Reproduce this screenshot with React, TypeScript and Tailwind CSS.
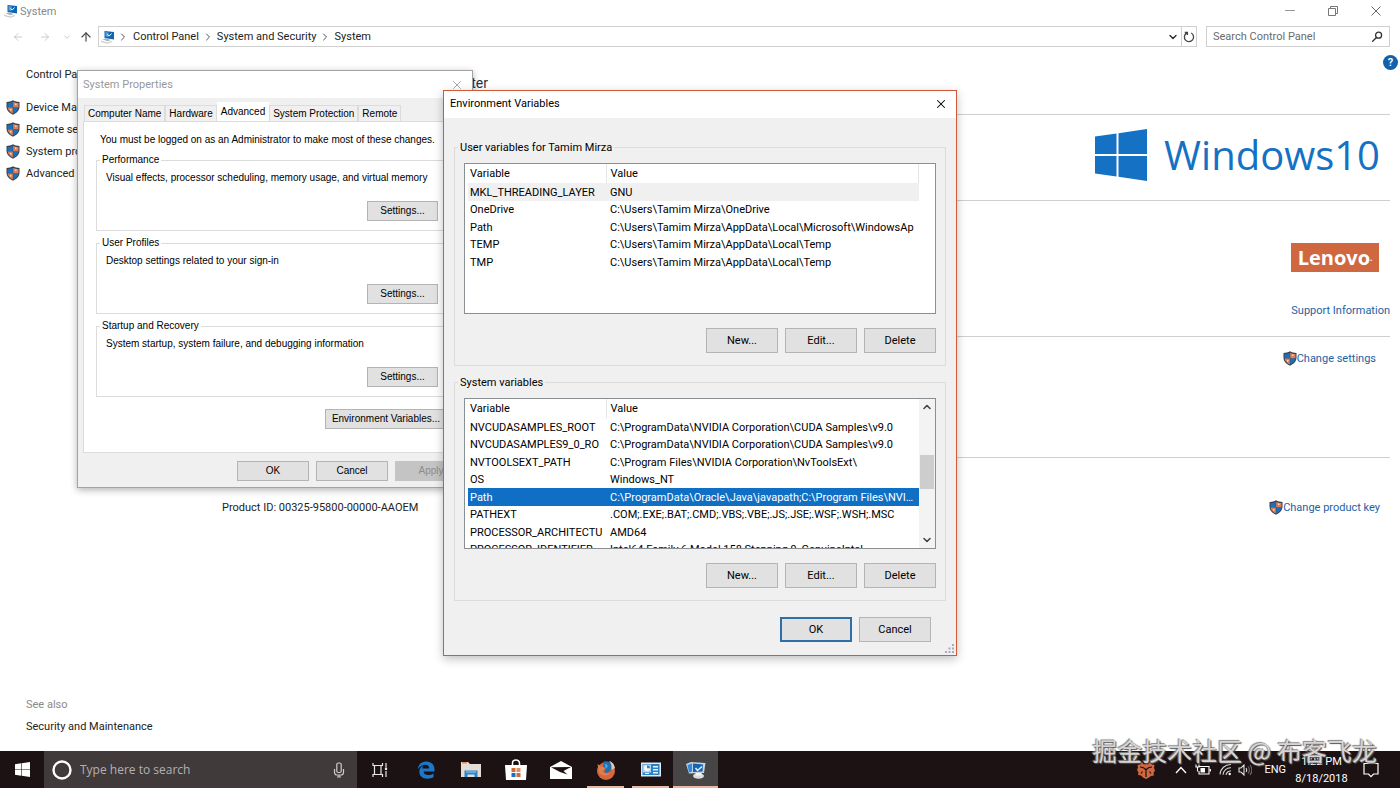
import React, { useState } from 'react';
import { ArrowLeft, ArrowRight, ArrowUp, ChevronDown, ChevronRight, ChevronUp, X } from 'lucide-react';

interface Variable {
  name: string;
  value: string;
}

const userVariables: Variable[] = [
  { name: 'MKL_THREADING_LAYER', value: 'GNU' },
  { name: 'OneDrive', value: 'C:\\Users\\Tamim Mirza\\OneDrive' },
  { name: 'Path', value: 'C:\\Users\\Tamim Mirza\\AppData\\Local\\Microsoft\\WindowsAp' },
  { name: 'TEMP', value: 'C:\\Users\\Tamim Mirza\\AppData\\Local\\Temp' },
  { name: 'TMP', value: 'C:\\Users\\Tamim Mirza\\AppData\\Local\\Temp' }
];

const systemVariables: Variable[] = [
  { name: 'NVCUDASAMPLES_ROOT', value: 'C:\\ProgramData\\NVIDIA Corporation\\CUDA Samples\\v9.0' },
  { name: 'NVCUDASAMPLES9_0_RO', value: 'C:\\ProgramData\\NVIDIA Corporation\\CUDA Samples\\v9.0' },
  { name: 'NVTOOLSEXT_PATH', value: 'C:\\Program Files\\NVIDIA Corporation\\NvToolsExt\\' },
  { name: 'OS', value: 'Windows_NT' },
  { name: 'Path', value: 'C:\\ProgramData\\Oracle\\Java\\javapath;C:\\Program Files\\NVIDI...' },
  { name: 'PATHEXT', value: '.COM;.EXE;.BAT;.CMD;.VBS;.VBE;.JS;.JSE;.WSF;.WSH;.MSC' },
  { name: 'PROCESSOR_ARCHITECTU', value: 'AMD64' },
  { name: 'PROCESSOR_IDENTIFIER', value: 'Intel64 Family 6 Model 158 Stepping 9, GenuineIntel' }
];

const tabs = ['Computer Name', 'Hardware', 'Advanced', 'System Protection', 'Remote'];

const propertyGroups = [
  { title: 'Performance', text: 'Visual effects, processor scheduling, memory usage, and virtual memory' },
  { title: 'User Profiles', text: 'Desktop settings related to your sign-in' },
  { title: 'Startup and Recovery', text: 'System startup, system failure, and debugging information' }
];

function ShieldIcon() {
  return (
    <svg viewBox="0 0 14 15" className="w-3.5 h-[15px] shrink-0" aria-hidden="true">
      <path d="M7 .3C5.200 1.600 3 2 .5 2v4.500C.5 10.300 3.400 13.300 7 14.700c3.600-1.400 6.500-4.400 6.500-8.200V2C11 2 8.800 1.600 7 .3Z" fill="#39404a" />
      <path d="M6.800 1.700C5.300 2.600 3.500 3 1.500 3v4.400h5.300Z" fill="#1c6fba" />
      <path d="M7.200 1.700C8.700 2.600 10.500 3 12.500 3v4.400H7.200Z" fill="#dc7f5a" />
      <path d="M1.600 7.600c.4 2.700 2.500 4.800 5.200 6V7.600Z" fill="#dc7f5a" />
      <path d="M12.400 7.600c-.4 2.700-2.500 4.800-5.200 6V7.600Z" fill="#1c6fba" />
      <path d="M9 3.500h1.500v1.500H9zM4 9h1.500v1.500H4z" fill="#f6d9c8" />
    </svg>
  );
}

function SystemIcon() {
  return (
    <svg viewBox="0 0 16 16" className="w-4 h-4 shrink-0" aria-hidden="true">
      <path d="M3.500 2 13 3v7.500L3.500 9Z" fill="#1266b0" />
      <path d="M4.500 3 7.500 3.400v4.500L4.500 7.400Z" fill="#4ba3e2" />
      <path d="m6.500 5.300 1.700 1.700L10.500 4.500" fill="none" stroke="#fff" />
      <path d="M1.500 10.300 5 9.600l5 1.400-3.500 1.200Z" fill="#a9afb5" />
      <path d="M0 12.300 6.500 14l4.500-1.500" fill="none" stroke="#c8ccd0" strokeWidth="1.200" />
    </svg>
  );
}

function WindowsLogo({ className }: { className: string }) {
  return (
    <svg viewBox="0 0 52 52" className={className} aria-hidden="true">
      <path d="M0 7.500 21.500 4.500V25H0ZM23.500 4.200 52 0v25H23.500ZM0 27h21.500v20.600L0 44.600ZM23.500 27H52v25l-28.500-4.200Z" fill="currentColor" />
    </svg>
  );
}

function DialogButton({ children, primary }: { children: React.ReactNode; primary?: boolean }) {
  return (
    <button
      type="button"
      className={`w-[72px] h-[25px] bg-[#e1e1e1] text-center leading-[17px] ${primary ? 'border-2 border-[#2f6fa8]' : 'border border-[#b4b4b4]'}`}
    >
      {children}
    </button>
  );
}

interface VariableGroupProps {
  title: string;
  rows: Variable[];
  highlight: number;
  highlightClass: string;
  scroll?: boolean;
}

function VariableGroup({ title, rows, highlight, highlightClass, scroll }: VariableGroupProps) {
  return (
    <fieldset className="border border-[#dcdcdc] px-[9px] pb-3">
      <legend className="-ml-1.5 px-0.5 h-4 leading-[17px]">{title}</legend>
      <div className="flex justify-between mt-2 h-[151px] border border-[#8a8f94] bg-white overflow-hidden">
        <div className="flex-1 pl-[3px]">
          <table className="w-full table-fixed border-collapse whitespace-nowrap leading-[17px]">
            <thead>
              <tr className="h-[19px] text-left">
                <th className="w-[138px] p-0 pl-0.5 font-normal border-r border-[#e5e5e5]">Variable</th>
                <th className={`p-0 pl-1 font-normal ${scroll ? '' : 'border-r border-[#e5e5e5]'}`}>Value</th>
              </tr>
            </thead>
            <tbody>
              {rows.map((row, i) => (
                <tr key={row.name} className={`odd:h-[18px] even:h-[17px] ${i === highlight ? highlightClass : ''}`}>
                  <td className="p-0 pl-0.5 overflow-hidden">{row.name}</td>
                  <td className="p-0 pl-1 truncate">{row.value}</td>
                </tr>
              ))}
            </tbody>
          </table>
        </div>
        {scroll ? (
          <div className="flex flex-col items-center w-4 bg-[#f3f3f3] text-[#404040]">
            <ChevronUp className="w-3 h-4" strokeWidth={3} />
            <div className="w-3.5 h-[34px] mt-10 mb-auto bg-[#cdcdcd]" />
            <ChevronDown className="w-3 h-4" strokeWidth={3} />
          </div>
        ) : (
          <div className="w-4" />
        )}
      </div>
      <div className="flex justify-end gap-[7px] mt-3.5">
        <DialogButton>New...</DialogButton>
        <DialogButton>Edit...</DialogButton>
        <DialogButton>Delete</DialogButton>
      </div>
    </fieldset>
  );
}

function SystemProperties() {
  const [active, setActive] = useState('Advanced');

  return (
    <section
      aria-label="System Properties"
      className="absolute left-[77px] top-[70px] w-[396px] border border-[#a3a3a3] bg-[#f0f0f0] shadow-[0_2px_7px_rgba(0,0,0,0.3)] text-[10px] leading-[14px] text-black font-['Liberation_Sans',Arial,sans-serif]"
    >
      <div className="flex items-center justify-between h-[27px] pl-[5px] pr-2 bg-white text-[#999] text-[11px] font-['Roboto','Noto_Sans',sans-serif]">
        <span>System Properties</span>
        <button type="button" aria-label="Close">
          <X className="w-3.5 h-3.5" strokeWidth={1.5} />
        </button>
      </div>
      <div className="px-[5px] pt-1 pb-1.5">
        <div role="tablist" className="flex items-end h-[19px] pl-px">
          {tabs.map((tab) => (
            <button
              key={tab}
              type="button"
              role="tab"
              aria-selected={tab === active}
              onClick={() => setActive(tab)}
              className={`whitespace-nowrap ${
                tab === active ? 'h-[19px] px-1 bg-white' : 'h-4 px-[3px] border border-b-0 border-[#dcdcdc]'
              }`}
            >
              {tab}
            </button>
          ))}
        </div>
        <div className="border border-[#dcdcdc] bg-white px-3 pt-[11px] pb-[23px]">
          <p className="pl-1 mb-1.5 whitespace-nowrap">You must be logged on as an Administrator to make most of these changes.</p>
          {propertyGroups.map((group) => (
            <fieldset key={group.title} className="mb-[5px] pl-[9px] pr-[15px] pb-[9px] border border-[#dcdcdc]">
              <legend className="-ml-1.5 px-0.5">{group.title}</legend>
              <p className="pt-1 whitespace-nowrap">{group.text}</p>
              <div className="flex justify-end mt-4">
                <button type="button" className="w-[71px] h-5 bg-[#e1e1e1] border border-[#b4b4b4]">
                  Settings...
                </button>
              </div>
            </fieldset>
          ))}
          <div className="flex justify-end mt-3 pr-[7px]">
            <button type="button" className="w-[122px] h-5 bg-[#e1e1e1] border border-[#b4b4b4] whitespace-nowrap">
              Environment Variables...
            </button>
          </div>
        </div>
        <div className="flex justify-end gap-[7px] mt-2">
          <button type="button" className="w-[72px] h-5 bg-[#e1e1e1] border border-[#b4b4b4]">OK</button>
          <button type="button" className="w-[72px] h-5 bg-[#e1e1e1] border border-[#b4b4b4]">Cancel</button>
          <button type="button" disabled className="w-[72px] h-5 bg-[#c4c4c4] text-[#8c8c8c]">Apply</button>
        </div>
      </div>
    </section>
  );
}

function EnvironmentVariables() {
  return (
    <section
      aria-label="Environment Variables"
      className="absolute left-[443px] top-[90px] w-[514px] border border-[#cf5a35] bg-[#f0f0f0] shadow-[0_3px_9px_rgba(0,0,0,0.25)] text-black"
    >
      <div className="flex items-center justify-between h-[27px] pl-1.5 pr-2 pb-0.5 bg-white">
        <span>Environment Variables</span>
        <button type="button" aria-label="Close">
          <X className="w-3.5 h-3.5" strokeWidth={1.8} />
        </button>
      </div>
      <div className="flex flex-col gap-2 px-2.5 pt-[21px] pb-[13px]">
        <VariableGroup title="User variables for Tamim Mirza" rows={userVariables} highlight={0} highlightClass="bg-[#f0f0f0]" />
        <VariableGroup title="System variables" rows={systemVariables} highlight={4} highlightClass="bg-[#0f6fc5] text-white" scroll />
        <div className="flex justify-end gap-[7px] mt-2 pr-[15px]">
          <DialogButton primary>OK</DialogButton>
          <DialogButton>Cancel</DialogButton>
        </div>
      </div>
      <svg viewBox="0 0 9 9" className="absolute right-0.5 bottom-0.5 w-[9px] h-[9px]" aria-hidden="true">
        <path d="M7 0h2v2H7zM3.500 3.500h2v2h-2zM7 3.500h2v2H7zM0 7h2v2H0zM3.500 7h2v2h-2zM7 7h2v2H7z" fill="#a9abc0" />
      </svg>
    </section>
  );
}

function AddressBar() {
  return (
    <div className="flex items-center mt-1 pl-3 pr-2.5 h-[21px]">
      <div className="flex items-center w-[86px] text-[#bdbdbd]">
        <button type="button" aria-label="Back" className="w-[27px]">
          <ArrowLeft className="w-3 h-3" strokeWidth={1.6} />
        </button>
        <button type="button" aria-label="Forward" className="w-[23px]">
          <ArrowRight className="w-3 h-3" strokeWidth={1.6} />
        </button>
        <button type="button" aria-label="Recent locations" className="w-[17px]">
          <ChevronDown className="w-2.5 h-2.5" />
        </button>
        <button type="button" aria-label="Up" className="text-[#444]">
          <ArrowUp className="w-3.5 h-3.5" />
        </button>
      </div>
      <div className="flex flex-1 items-center h-full pl-0.5 leading-[17px] border border-[#d0d0d0]">
        <SystemIcon />
        <ChevronRight className="w-3 h-3 mr-1 text-[#555]" />
        <a href="#control-panel">Control Panel</a>
        <ChevronRight className="w-3 h-3 mx-[3px] text-[#555]" />
        <a href="#security">System and Security</a>
        <ChevronRight className="w-3 h-3 mx-[3px] text-[#555]" />
        <a href="#system">System</a>
        <button type="button" aria-label="Previous locations" className="ml-auto mr-0.5">
          <ChevronDown className="w-3 h-3" strokeWidth={2.5} />
        </button>
        <button type="button" aria-label="Refresh" className="flex items-center justify-center w-[15px] h-full border-l border-[#d0d0d0]">
          <svg viewBox="0 0 12 12" className="w-3 h-3" fill="none" stroke="#444" strokeWidth="1.300">
            <path d="M8.200 2A4.600 4.600 0 1 1 3.600 2.100M1.800 1.500h2.600V4" />
          </svg>
        </button>
      </div>
      <label className="flex items-center w-[184px] h-full ml-[9px] px-1.5 border border-[#d0d0d0]">
        <input type="text" aria-label="Search Control Panel" placeholder="Search Control Panel" className="flex-1 min-w-0 leading-[17px] outline-none placeholder:text-[#6b6b6b]" />
        <svg viewBox="0 0 12 12" className="w-3 h-3" fill="none" stroke="#333" strokeWidth="1.300" aria-hidden="true">
          <circle cx="7.600" cy="4.200" r="3" />
          <path d="M5.400 6.500 1.200 10.800" />
        </svg>
      </label>
    </div>
  );
}

function Sidebar() {
  const links = ['Device Manager', 'Remote settings', 'System protection', 'Advanced system settings'];

  return (
    <nav className="flex flex-col w-[212px] pt-4 pb-[13px] leading-[22px]">
      <a href="#home" className="pl-[26px] pt-px mb-2.5">Control Panel Home</a>
      {links.map((link) => (
        <a key={link} href="#task" className="flex items-center gap-1.5 pl-1.5">
          <ShieldIcon />
          <span className="pt-px leading-[21px]">{link}</span>
        </a>
      ))}
      <span className="mt-auto pl-[26px] text-[#8a8a8a]">See also</span>
      <a href="#maintenance" className="pl-[26px]">Security and Maintenance</a>
    </nav>
  );
}

function SystemInfo() {
  return (
    <main className="flex-1 pt-6 pr-2.5">
      <h1 className="h-[43px] leading-6 text-sm text-[#26313f]">View basic information about your computer</h1>
      <div className="flex justify-end items-center h-[86px] pr-2.5 pb-1.5 gap-[17px] border-t border-[#cfcfcf] text-[#1471c4]">
        <WindowsLogo className="w-[52px] h-[52px]" />
        <div className="flex text-[40px] leading-none font-normal font-['Open_Sans','Noto_Sans',sans-serif]">
          <span>Windows</span>
          <span>10</span>
        </div>
      </div>
      <div className="flex flex-col items-end h-[136px] pt-[42px] border-t border-[#cfcfcf]">
        <div className="flex items-center justify-center w-[88px] h-[29px] mr-[11px] bg-[#cf6740] text-white text-[20px] font-bold leading-none font-['Open_Sans',sans-serif]">
          Lenovo<span className="text-[8px]">.</span>
        </div>
        <a href="#support" className="mt-7 leading-[22px] text-[#1b62a5]">Support Information</a>
      </div>
      <div className="flex justify-end h-[121px] pt-2.5 pr-3.5 border-t border-[#cfcfcf]">
        <a href="#settings" className="flex items-center h-[22px] text-[#1b62a5]">
          <ShieldIcon />
          <span className="pt-px">Change settings</span>
        </a>
      </div>
      <div className="flex justify-between items-center h-[99px] pl-2.5 pr-2.5 border-t border-[#cfcfcf]">
        <span className="pt-px">Product ID: 00325-95800-00000-AAOEM</span>
        <a href="#key" className="flex items-center text-[#1b62a5]">
          <ShieldIcon />
          <span className="pt-px">Change product key</span>
        </a>
      </div>
    </main>
  );
}

interface TaskButtonProps {
  label: string;
  running?: boolean;
  current?: boolean;
  children: React.ReactNode;
}

function TaskButton({ label, running, current, children }: TaskButtonProps) {
  return (
    <button
      type="button"
      aria-label={label}
      className={`relative flex items-center justify-center w-[45px] h-full ${current ? 'bg-[#474545]' : ''}`}
    >
      {children}
      {running && <span className={`absolute bottom-0 h-0.5 bg-[#e9b7a6] ${current ? 'inset-x-0' : 'inset-x-1'}`} />}
    </button>
  );
}

function Taskbar() {
  return (
    <footer className="flex items-center h-[37px] bg-[#1c1213] text-white">
      <button type="button" aria-label="Start" className="flex items-center justify-center w-11 h-full">
        <WindowsLogo className="w-[15px] h-[15px]" />
      </button>
      <label className="flex items-center w-[313px] h-full px-2 bg-[#403a3b]">
        <svg viewBox="0 0 20 20" className="w-5 h-5" fill="none" stroke="#fff" strokeWidth="2.400" aria-hidden="true">
          <circle cx="10" cy="10" r="8.500" />
        </svg>
        <input
          type="text"
          aria-label="Type here to search"
          placeholder="Type here to search"
          className="flex-1 min-w-0 pl-2 text-[12px] outline-none placeholder:text-[#b5b1b1] font-['Open_Sans','Noto_Sans',sans-serif]"
        />
        <svg viewBox="0 0 12 16" className="w-3 h-4 mr-1" fill="none" stroke="#cfcccc" strokeWidth="1.200" aria-hidden="true">
          <rect x="3.800" y="1" width="4.400" height="9.500" rx="1.500" />
          <path d="M1.500 7v3.500a2.500 2.500 0 0 0 2.500 2.500h4a2.500 2.500 0 0 0 2.500-2.500V7M6 13v2M4 15h4" />
        </svg>
      </label>
      <TaskButton label="Task view">
        <svg viewBox="0 0 16 16" className="w-4 h-4" fill="none" stroke="#e8e6e6" strokeWidth="1.200">
          <path d="M1 1v2.500h9.500V1M1 15v-2.500h9.500V15M2.500 3.500v9M9 3.500v9M14 1v4M14 9v6" />
          <path d="M14 5.500v2.500" strokeWidth="2.200" />
        </svg>
      </TaskButton>
      <div className="flex h-full ml-px">
        <TaskButton label="Edge">
          <svg viewBox="0 0 18 18" className="w-[18px] h-[18px]">
            <path d="M.7 8.200C1.200 3.600 4.600.4 9.300.4c5 0 8.200 3.300 8.200 8.200v1.900H6.500c.2 2.300 2.100 3.600 4.800 3.600 1.900 0 3.700-.5 5.200-1.500v3.700c-1.700.9-3.600 1.400-5.900 1.400-5.100 0-8.300-2.800-8.300-7 0-2.900 1.600-5.200 4.400-6.500-.9 1-1.300 2-1.400 3.300h6.900c0-2.300-1.300-3.700-3.800-3.700C5.300 3.800 2.700 5.400.7 8.200Z" fill="#1b78cc" />
          </svg>
        </TaskButton>
        <TaskButton label="File Explorer">
          <svg viewBox="0 0 20 17" className="w-5 h-[17px]">
            <path d="M0 1h7l2 2h11v13H0Z" fill="#e3ddd6" />
            <path d="M1 1h5v1.500H1z" fill="#dd8a6b" />
            <path d="M3.500 16V9.500H16.500V16h-3v-2.500h-7V16Z" fill="#2e83cc" />
            <path d="M5 10.500h10v1H5z" fill="#9cc8ec" />
          </svg>
        </TaskButton>
        <TaskButton label="Store">
          <svg viewBox="0 0 22 21" className="w-[22px] h-[21px]">
            <path d="M7.500 6V4a3.500 3 0 0 1 7 0v2" fill="none" stroke="#fff" strokeWidth="1.500" />
            <path d="M0 6h22l-1 15H1Z" fill="#fff" />
            <path d="M6.500 9h4v4h-4zM11.500 14h4v4h-4z" fill="#d2663f" />
            <path d="M11.500 9h4v4h-4z" fill="#dc8e5c" />
            <path d="M6.500 14h4v4h-4z" fill="#1b70bd" />
          </svg>
        </TaskButton>
        <TaskButton label="Mail">
          <svg viewBox="0 0 22 18" className="w-[22px] h-[18px]">
            <path d="M0 6 11 0l11 6v12H0Z" fill="#fff" />
            <path d="m1 6.300 20-.3-7.500 4 4 3.500L10 11Z" fill="#1c1213" />
          </svg>
        </TaskButton>
        <TaskButton label="Firefox" running>
          <svg viewBox="0 0 20 20" className="w-5 h-5">
            <circle cx="10" cy="11" r="9" fill="#d4673c" />
            <path d="M8 1.500c4-1 7 .5 8 4.500l-1.500 5L11 13 8 12l1.500-3L7 7Z" fill="#1f6fb3" />
            <path d="M9 4c2-.5 3 1 2.500 3L9.500 9Z" fill="#55a5dd" />
            <path d="M13 1c3 .5 5.500 3.500 6 7l-3.500 2C16 6.500 15 3 13 1Z" fill="#e9c6a4" />
            <path d="M1.500 4 5 6.500l3 .5 1 2-2.500 2c1 2.500 4.500 3.200 8 1.500C12.500 16.500 5 16.500 3 12Z" fill="#e07d4e" />
          </svg>
        </TaskButton>
        <TaskButton label="Control Panel" running>
          <svg viewBox="0 0 20 15" className="w-5 h-[15px]">
            <path d="M0 .5h20v14H0Z" fill="#dcebf5" />
            <path d="M1.500 2h17v11h-17Z" fill="#2b81c8" />
            <path d="M2 2.500h8v8H2Z" fill="#b4d3ea" />
            <circle cx="6" cy="6.300" r="3" fill="#f1f6fa" />
            <path d="M6 3.300v3h3a3 3 0 0 0-3-3Z" fill="#3b7fb8" />
            <path d="M12 4h5v1.500h-5zM12 7h5v1.500h-5zM4 11h4v1H4zM12 10h5v1.500h-5z" fill="#e7f3fb" />
          </svg>
        </TaskButton>
        <TaskButton label="System" running current>
          <svg viewBox="0 0 20 20" className="w-5 h-5">
            <path d="M0 4 5 2l14.500 1L18 13 3 13.500Z" fill="#c3d5e2" />
            <path d="M1.500 5 6 3.500v8L3 12.500Z" fill="#2b8bdc" />
            <path d="m7 3.500 10 1-.5 7-9.500.5Z" fill="#1465ad" />
            <path d="m9.500 8 2 2.500L16 6.500" fill="none" stroke="#e9f1f7" strokeWidth="1.500" />
            <ellipse cx="12.500" cy="16" rx="5.500" ry="2.800" fill="#dadcdd" />
            <path d="M9.500 13h6v2.500h-6z" fill="#f3f4f4" />
          </svg>
        </TaskButton>
      </div>
      <div className="flex items-center h-full ml-auto pr-[21px]">
        <svg viewBox="0 0 18 18" className="w-[18px] h-[18px]" aria-hidden="true">
          <path d="M3 3.500 5 1l1.500 2.300h5L13 1l2 2.500 2.500.500-.500 3 1 2.500-1.500 2.500.500 2.500-3 .500L12 16.500 9 18l-3-1.500L4 14.500 1 14l.500-2.500L0 9l1-2.500-.500-2.500Z" fill="#cf6740" />
          <path d="M3 6c2 0 4.500.8 6 2.800C10.500 6.800 13 6 15 6M9 8.800V16M5.500 10.500 4 12.500M12.500 10.500 14 12.500" fill="none" stroke="#1c1213" strokeWidth="1.200" />
        </svg>
        <svg viewBox="0 0 12 8" className="w-3 h-2 ml-5" fill="none" stroke="#fff" strokeWidth="1.300" aria-hidden="true">
          <path d="m1 7 5-5.500L11 7" />
        </svg>
        <svg viewBox="0 0 16 12" className="w-4 h-3 ml-2" fill="none" stroke="#fff" strokeWidth="1.100" aria-hidden="true">
          <path d="M4.500 2.500H14v7.500H4V7M1 .5v2.500h3V.5M2.500 3v4.500M15.400 5v2.500" />
          <path d="M5.500 4H10v4.500H5.500z" fill="#fff" stroke="none" />
        </svg>
        <svg viewBox="0 0 13 13" className="w-[13px] h-[13px] ml-2" fill="none" stroke="#d5d2d2" strokeWidth="1.100" aria-hidden="true">
          <path d="M1 11.500A10.500 10.500 0 0 1 12 1.500M4 11.800A7.500 7.500 0 0 1 12 4.700M7 12a4.500 4.500 0 0 1 5-4" />
          <circle cx="10.700" cy="11" r="1.200" fill="#fff" stroke="none" />
        </svg>
        <svg viewBox="0 0 14 12" className="w-3.5 h-3 ml-1.5" fill="none" stroke="#e0dede" strokeWidth="1.100" aria-hidden="true">
          <path d="M1 4h2L6 1v10L3 8H1ZM8 4c.8 1.200.8 2.800 0 4" />
          <path d="M10 2.500c1.800 2.200 1.800 4.800 0 7M12 1c2.200 3 2.200 7 0 10" stroke="#6f6a6b" />
        </svg>
        <span className="ml-3">ENG</span>
        <div className="w-[71px] text-center leading-[17px]">
          <div>1:22 PM</div>
          <div>8/18/2018</div>
        </div>
        <button type="button" aria-label="Notifications" className="ml-1.5">
          <svg viewBox="0 0 16 16" className="w-4 h-4" fill="none" stroke="#fff" strokeWidth="1.200">
            <path d="M1 1.500h14v10.500h-4.500L8 14.700 5.500 12H1Z" />
          </svg>
        </button>
      </div>
    </footer>
  );
}

export default function App() {
  return (
    <div className="relative flex flex-col min-h-screen overflow-hidden bg-white text-[11px] leading-4 text-[#222] font-['Roboto','Noto_Sans',sans-serif]">
      <header className="flex items-center h-[22px] pl-1 pr-[18px] leading-[17px] text-[#888]">
        <SystemIcon />
        <span>System</span>
        <div className="flex items-center gap-[31px] ml-auto">
          <button type="button" aria-label="Minimize" className="w-3">
            <svg viewBox="0 0 12 12" className="w-3 h-3" stroke="#999"><path d="M1 5.500h10" /></svg>
          </button>
          <button type="button" aria-label="Restore" className="w-3">
            <svg viewBox="0 0 12 12" className="w-3 h-3" fill="none" stroke="#777">
              <path d="M1.500 3.500h7v7h-7zM3.500 3.500v-2h7v7h-2" />
            </svg>
          </button>
          <button type="button" aria-label="Close" className="w-3">
            <svg viewBox="0 0 12 12" className="w-3 h-3" stroke="#666"><path d="m1.500 1.500 9 9M10.500 1.500l-9 9" /></svg>
          </button>
        </div>
      </header>
      <AddressBar />
      <div className="relative flex flex-1">
        <Sidebar />
        <SystemInfo />
        <button type="button" aria-label="Help" className="absolute right-0.5 top-2 w-[15px] h-[15px] rounded-full bg-[#1261ae] text-white text-[11px] leading-[15px] font-semibold text-center">
          ?
        </button>
      </div>
      <Taskbar />

      <SystemProperties />
      <EnvironmentVariables />

      <p className="absolute right-[23px] bottom-[22px] text-[25px] leading-8 whitespace-nowrap text-[#d8d4d4] [text-shadow:1px_1px_1px_#555,-1px_-1px_1px_#888] font-['Noto_Sans_CJK_SC',sans-serif]">
        掘金技术社区 @ 布客飞龙
      </p>
    </div>
  );
}
